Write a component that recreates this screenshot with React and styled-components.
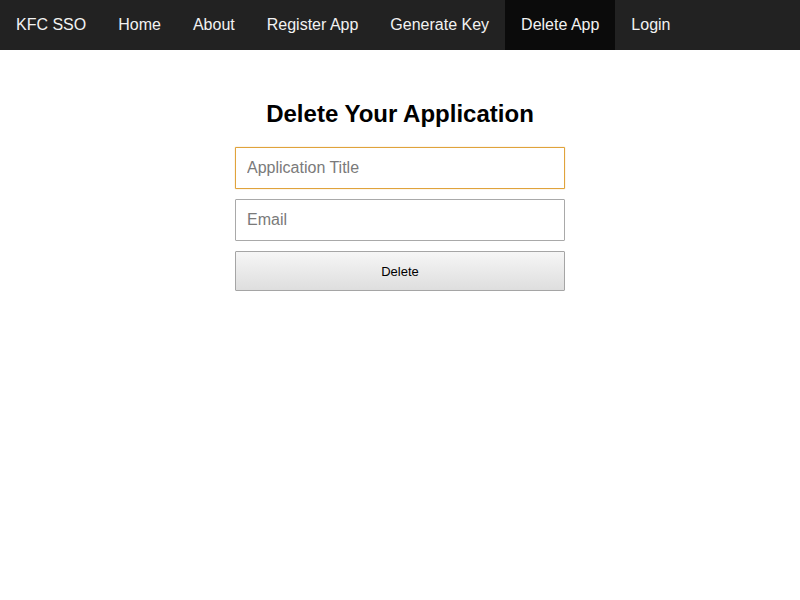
import React from 'react';
import styled, { createGlobalStyle } from 'styled-components';

const GlobalStyle = createGlobalStyle`
  body {
    margin: 0;
    background: #fff;
    font-family: "Liberation Sans", Arial, sans-serif;
  }
`;

const links = ['Home', 'About', 'Register App', 'Generate Key', 'Delete App', 'Login'];

function App() {
  return (
    <>
      <GlobalStyle />
      <Nav>
        <NavItem>KFC SSO</NavItem>
        {links.map((l) => (
          <NavItem key={l} active={l === 'Delete App'}>{l}</NavItem>
        ))}
      </Nav>
      <Main>
        <Title>Delete Your Application</Title>
        <Form onSubmit={(e) => e.preventDefault()}>
          <Input autoFocus placeholder="Application Title" />
          <Input placeholder="Email" />
          <Button type="submit">Delete</Button>
        </Form>
      </Main>
    </>
  );
}

export default App;

const Nav = styled.nav`
  display: flex;
  height: 50px;
  background: #222222;
`;

const NavItem = styled.a`
  display: flex;
  align-items: center;
  padding: 0 16px;
  color: #f2f2f2;
  font-size: 16px;
  background: ${(p) => (p.active ? '#0b0b0b' : 'transparent')};
  cursor: pointer;
`;

const Main = styled.main`
  display: flex;
  flex-direction: column;
  align-items: center;
  padding-top: 50px;
`;

const Title = styled.h2`
  margin: 0 0 19px;
  font-size: 24px;
  line-height: 28px;
  font-weight: bold;
  color: #000;
`;

const Form = styled.form`
  display: flex;
  flex-direction: column;
  gap: 10px;
  width: 330px;
`;

const Input = styled.input`
  box-sizing: border-box;
  height: 42px;
  padding: 0 11px;
  border: 1px solid #a9a9a9;
  border-radius: 1px;
  font-family: "Liberation Sans", Arial, sans-serif;
  font-size: 16px;
  color: #000;
  &::placeholder {
    color: #7a7a7a;
  }
  &:focus {
    outline: none;
    border-color: #e0a33c;
    box-shadow: 0 0 1px #e0a33c;
  }
`;

const Button = styled.button`
  height: 40px;
  border: 1px solid #a5a5a5;
  border-radius: 1px;
  background: linear-gradient(#f6f6f6, #dedede);
  font-family: "Liberation Sans", Arial, sans-serif;
  font-size: 13px;
  color: #000;
  cursor: pointer;
`;
